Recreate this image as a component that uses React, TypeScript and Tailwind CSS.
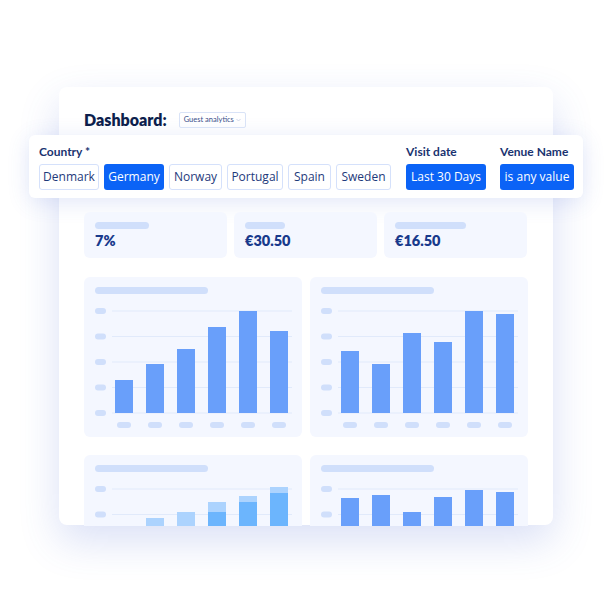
import React from "react";

const font = { fontFamily: "Lato, 'Noto Sans', sans-serif" };
const chipFont = { fontFamily: "'Open Sans', 'Noto Sans', sans-serif" };

type Bar = { top: number; mid?: number };

const ROWS = [34, 59.5, 85, 110.5, 136];

function ChartCard({ bars, stacked = false }: { bars: (Bar | null)[]; stacked?: boolean }) {
  const bottom = 136;
  return (
    <div className="w-[218px] h-[160px] shrink-0 rounded-[6px] bg-[#f4f7ff] overflow-hidden">
      <svg width="218" height="160" viewBox="0 0 218 160">
        <rect x="11" y="10" width="113" height="7" rx="3.5" fill="#d0dffb" />
        {ROWS.map((y) => (
          <g key={y}>
            <rect x="11" y={y - 3} width="11" height="6" rx="3" fill="#d0dffb" />
            <line x1="28" x2="208" y1={y} y2={y} stroke="#e1eafb" strokeWidth="1" />
          </g>
        ))}
        {bars.map((b, i) => {
          const x = 31 + i * 31;
          if (!b) return null;
          if (stacked) {
            return (
              <g key={i}>
                <rect x={x} y={b.top} width="18" height={bottom - b.top} fill="#acd3fe" />
                {b.mid !== undefined && (
                  <rect x={x} y={b.mid} width="18" height={bottom - b.mid} fill="#6cb5fd" />
                )}
              </g>
            );
          }
          return <rect key={i} x={x} y={b.top} width="18" height={bottom - b.top} fill="#699ffa" />;
        })}
        {bars.map((_, i) => (
          <rect key={"l" + i} x={33 + i * 31} y="145" width="14" height="6" rx="3" fill="#d0dffb" />
        ))}
      </svg>
    </div>
  );
}

function StatCard({ bar, value }: { bar: number; value: string }) {
  return (
    <div className="w-[143px] h-[46px] rounded-[6px] bg-[#f4f7ff] pt-[10px] px-[11px]">
      <div className="h-[7px] rounded-full bg-[#d0dffb]" style={{ width: bar }} />
      <div className="mt-[3px] text-[14.5px] leading-[18px] font-extrabold text-[#183a8c]">{value}</div>
    </div>
  );
}

function Chip({ label, active = false, w }: { label: string; active?: boolean; w: string }) {
  return (
    <div
      style={chipFont}
      className={`${w} h-[26px] rounded-[3px] flex items-center justify-center text-[12px] ${
        active ? "bg-[#0b63f6] text-white" : "border border-[#d5e1fb] bg-white text-[#1e3a7b]"
      }`}
    >
      {label}
    </div>
  );
}

export default function App() {
  return (
    <div className="w-[612px] h-[612px] bg-white pt-[87px] pl-[59px]" style={font}>
      <div className="w-[494px] h-[438px] rounded-[8px] bg-white shadow-[0_16px_40px_rgba(70,100,210,0.2)] pt-[25px] px-[25px]">
        {/* header */}
        <div className="flex items-center h-[16px]">
          <div className="text-[16px] leading-[16px] font-extrabold text-[#0d1f4d]">Dashboard:</div>
          <div className="ml-[12px] w-[67px] h-[16px] border border-[#d9e3f7] rounded-[2px] flex items-center pl-[4px] text-[7.5px] text-[#3a4f8a]">
            Guest analytics
            <svg className="ml-auto mr-[4px]" width="5" height="4" viewBox="0 0 5 4">
              <path d="M0.5 1 L2.5 3 L4.5 1" fill="none" stroke="#c3cde3" strokeWidth="0.8" />
            </svg>
          </div>
        </div>

        {/* filter bar */}
        <div className="-mx-[55px] mt-[7px] h-[63px] rounded-[6px] bg-white shadow-[0_4px_22px_rgba(70,100,210,0.16)] pt-[9px] pl-[10px] flex">
          <div>
            <div className="text-[12px] leading-[16px] font-bold text-[#1a3370]">Country *</div>
            <div className="mt-[4px] flex gap-[5px]">
              <Chip label="Denmark" w="w-[60px]" />
              <Chip label="Germany" active w="w-[60px]" />
              <Chip label="Norway" w="w-[53px]" />
              <Chip label="Portugal" w="w-[56px]" />
              <Chip label="Spain" w="w-[43px]" />
              <Chip label="Sweden" w="w-[55px]" />
            </div>
          </div>
          <div className="ml-[15px]">
            <div className="text-[12px] leading-[16px] font-bold text-[#1a3370]">Visit date</div>
            <div className="mt-[4px] flex">
              <Chip label="Last 30 Days" active w="w-[80px]" />
            </div>
          </div>
          <div className="ml-[14px]">
            <div className="text-[12px] leading-[16px] font-bold text-[#1a3370]">Venue Name</div>
            <div className="mt-[4px] flex">
              <Chip label="is any value" active w="w-[74px]" />
            </div>
          </div>
        </div>

        {/* stats */}
        <div className="mt-[14px] flex gap-[7px]">
          <StatCard bar={54} value="7%" />
          <StatCard bar={40} value="€30.50" />
          <StatCard bar={71} value="€16.50" />
        </div>

        {/* charts */}
        <div className="mt-[19px] h-[249px] overflow-hidden">
          <div className="flex gap-[8px]">
            <ChartCard bars={[{ top: 103 }, { top: 87 }, { top: 72 }, { top: 50 }, { top: 34 }, { top: 54 }]} />
            <ChartCard bars={[{ top: 74 }, { top: 87 }, { top: 56 }, { top: 65 }, { top: 34 }, { top: 37 }]} />
          </div>
          <div className="mt-[18px] flex gap-[8px]">
            <ChartCard
              stacked
              bars={[
                { top: 128 },
                { top: 63 },
                { top: 57 },
                { top: 47, mid: 57 },
                { top: 41, mid: 47 },
                { top: 32, mid: 38 },
              ]}
            />
            <ChartCard bars={[{ top: 43 }, { top: 40 }, { top: 57 }, { top: 42 }, { top: 35 }, { top: 37 }]} />
          </div>
        </div>
      </div>
    </div>
  );
}
